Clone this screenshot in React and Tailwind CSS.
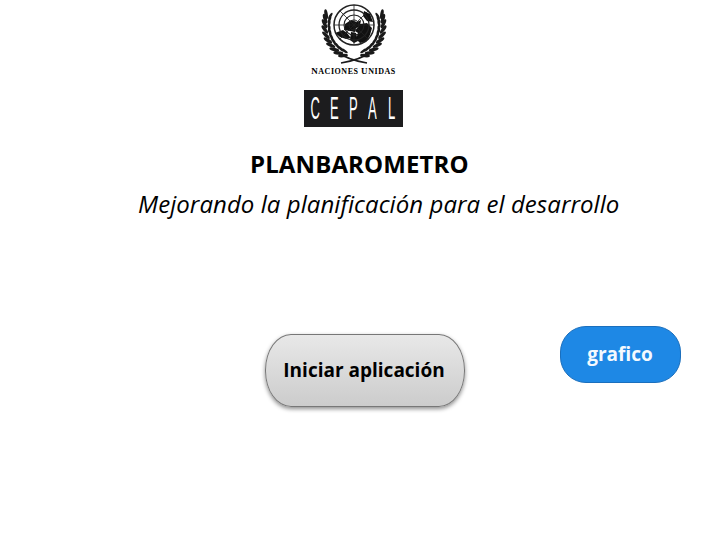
import React from "react";

const LEAF_ANGLES = [112, 122, 132, 142, 152, 162, 172, 182, 191, 199];

// One olive branch, drawn on the left and mirrored for the right
function Branch() {
  return (
    <g fill="#1a1a1a">
      {LEAF_ANGLES.map((a) => {
        const rad = (a * Math.PI) / 180;
        const ox = 29.5 * Math.cos(rad);
        const oy = 25 + 33 * Math.sin(rad);
        const ix = 25 * Math.cos(rad);
        const iy = 25 + 28 * Math.sin(rad);
        return (
          <g key={a}>
            <ellipse cx={ox} cy={oy} rx="1.7" ry="5" transform={`rotate(${a - 28} ${ox} ${oy})`} />
            <ellipse cx={ix} cy={iy} rx="1.3" ry="3.6" transform={`rotate(${a + 12} ${ix} ${iy})`} />
          </g>
        );
      })}
      <path d="M-19 51Q-6 60 13 63" fill="none" stroke="#1a1a1a" strokeWidth="1.7" />
    </g>
  );
}

// UN emblem: polar map inside a ring grid, olive branches around it
function UnEmblem() {
  return (
    <svg width="70" height="64" viewBox="-35 0 70 64" className="block">
      <path d="M-9 24L-3 20L3 22L7 20L6 26L2 28L1 32L-4 31L-10 30Z" fill="#111" />
      <path d="M6 24L13 23L18 28L16 35L12 42L6 43L2 39L4 33L1 31Z" fill="#111" />
      <path d="M-19 33L-11 30L-7 33L-3 38L-8 39L-14 37Z" fill="#111" />
      <path d="M10 11L16 14L19 22L13 21L9 16Z" fill="#111" />
      <path d="M-3 32L2 33L4 41L0 43L-4 40Z" fill="#111" />
      <g fill="none" stroke="#222">
        <circle cx="0" cy="25" r="20" strokeWidth="1.5" />
        <circle cx="0" cy="25" r="15" strokeWidth="1.3" />
        <circle cx="0" cy="25" r="10" strokeWidth="1.1" />
        <circle cx="0" cy="25" r="5" strokeWidth="1" />
        <path d="M0 5V45M-20 25H20M-14.1 10.9L14.1 39.1M14.1 10.9L-14.1 39.1" strokeWidth="0.8" />
      </g>
      <Branch />
      <g transform="scale(-1 1)">
        <Branch />
      </g>
    </svg>
  );
}

export default function App() {
  return (
    <div className="w-[720px] h-[540px] overflow-hidden bg-white text-black font-['Open_Sans',sans-serif]">
      {/* Logos */}
      <div className="flex flex-col items-center w-[99px] ml-[304px]">
        <UnEmblem />
        <div className="mt-[3px] h-[9px] leading-[9px] whitespace-nowrap font-['Liberation_Serif',serif] font-bold text-[8px] tracking-[0.55px] text-black">
          <span className="text-[9px]">N</span>ACIONES <span className="text-[9px]">U</span>NIDAS
        </div>
        <div className="mt-[14px] w-[99px] h-[37px] px-[8px] bg-[#1c1c1e] flex items-center justify-between">
          {["C", "E", "P", "A", "L"].map((letter) => (
            <div key={letter} className="w-[7px] flex justify-center">
              <span className="font-['Liberation_Sans',sans-serif] antialiased text-white text-[31px] leading-none scale-x-[0.42]">
                {letter}
              </span>
            </div>
          ))}
        </div>
      </div>

      {/* Titles */}
      <h1 className="ml-[250px] mt-[22px] text-[24px] leading-[30px] tracking-[0.12px] font-bold whitespace-nowrap">PLANBAROMETRO</h1>
      <p className="ml-[138px] mt-[8px] text-[24px] leading-[33px] tracking-[0.06px] italic whitespace-nowrap">
        Mejorando la planificación para el desarrollo
      </p>

      {/* Buttons */}
      <div className="flex items-start mt-[106px] ml-[265px]">
        <button className="mt-[8px] pb-[1px] pr-[2px] w-[200px] h-[73px] rounded-[26px/36px] border border-[#777] bg-gradient-to-b from-[#e8e8e8] to-[#cccccc] shadow-[0_2px_4px_rgba(0,0,0,0.45)] text-[19px] font-bold text-black">
          Iniciar aplicación
        </button>
        <button className="ml-[95px] pb-[1px] pr-[1px] w-[121px] h-[57px] rounded-[26px] border border-[#1b6fbd] bg-[#1e88e5] text-[19px] font-bold text-[#f4f9fe]">
          grafico
        </button>
      </div>
    </div>
  );
}
